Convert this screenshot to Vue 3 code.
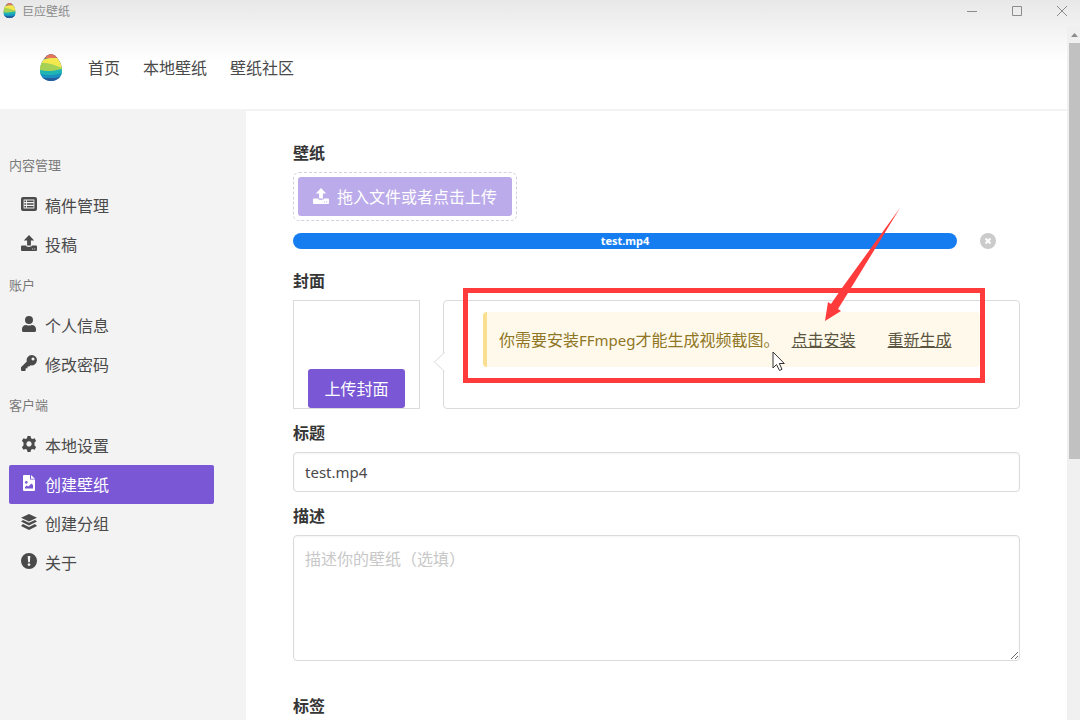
<script setup>
import { ref } from 'vue'

const title = ref('test.mp4')
const description = ref('')

const nav = ['首页', '本地壁纸', '壁纸社区']

const groups = [
  {
    name: '内容管理',
    items: [
      { text: '稿件管理', icon: 'list' },
      { text: '投稿', icon: 'upload' },
    ],
  },
  {
    name: '账户',
    items: [
      { text: '个人信息', icon: 'user' },
      { text: '修改密码', icon: 'key' },
    ],
  },
  {
    name: '客户端',
    items: [
      { text: '本地设置', icon: 'cog' },
      { text: '创建壁纸', icon: 'image', active: true },
      { text: '创建分组', icon: 'layers' },
      { text: '关于', icon: 'about' },
    ],
  },
]

const icons = {
  list: 'M2 1h12a2 2 0 0 1 2 2v10a2 2 0 0 1-2 2H2a2 2 0 0 1-2-2V3a2 2 0 0 1 2-2zM2.6 3.6v8.8h10.8V3.6zM3.4 4.4h1.7v1.6H3.4zM6 4.4h6.6v1.6H6zM3.4 7.2h1.7v1.6H3.4zM6 7.2h6.6v1.6H6zM3.4 10h1.7v1.6H3.4zM6 10h6.6v1.6H6z',
  upload: 'M8 0L13.2 5.400H9.900V10.600H6.100V5.400H2.800zM1 10.600H5.200C5.400 11.800 6 12 8 12S10.600 11.800 10.800 10.600H15a1 1 0 0 1 1 1V15a1 1 0 0 1-1 1H1a1 1 0 0 1-1-1V11.600a1 1 0 0 1 1-1zM11.200 13.600v.9h.9v-.9zM13.300 13.600v.9h.9v-.9z',
  user: 'M8 0a4 4 0 1 1 0 8 4 4 0 0 1 0-8zM5.2 9c1.8.8 3.8.8 5.6 0C13.400 9 15 10.800 15 13.200V14.500A1.500 1.500 0 0 1 13.500 16h-11A1.500 1.500 0 0 1 1 14.500V13.200C1 10.800 2.600 9 5.200 9z',
  key: 'M10.8 0a5.200 5.200 0 1 1-1.300 10.250L8.200 11.500H6.500V13.300H4.700V15.200L4 16H.7L0 15.300V12.300L5.800 6.500A5.200 5.200 0 0 1 10.800 0zM12 2.500a1.500 1.500 0 1 0 .01 0z',
  cog: 'M6.500 0h3l.5 2.200 1.400.8 2.200-.7 1.500 2.600L13.500 6.500v3l1.600 1.600-1.500 2.600-2.200-.7-1.400.8L9.500 16h-3L6 13.800 4.600 13l-2.200.7L.9 11.100 2.500 9.500v-3L.9 4.900l1.500-2.600 2.200.7L6 2.200zM8 5.300a2.700 2.700 0 1 0 .01 0z',
  image: 'M3 0H9V4.500H14V15a1 1 0 0 1-1 1H3a1 1 0 0 1-1-1V1a1 1 0 0 1 1-1zM10 0L14 3.700H10zM5.300 6a1.400 1.400 0 1 0 .01 0zM4 13.500H12V10L10.500 8.600 7.300 11.600 5.800 10.400 4 12z',
  layers: 'M8 0L16 3.800 8 7.600 0 3.800zM2 5.900L8 8.700 14 5.900 16 7.600 8 11.600 0 7.600zM2 10.100L8 12.900 14 10.100 16 11.900 8 16 0 11.900z',
  about: 'M8 0a8 8 0 1 1 0 16A8 8 0 0 1 8 0zM6.700 3L7.100 9.200H8.900L9.300 3zM8 10.200a1.400 1.400 0 1 0 .01 0z',
}
</script>

<template>
  <div class="window">
    <svg class="defs" width="0" height="0" aria-hidden="true">
      <defs>
        <clipPath id="egg-shape">
          <path d="M11 0C16 0 22 9 22 16C22 23 17 27 11 27S0 23 0 16C0 9 6 0 11 0z" />
        </clipPath>
        <symbol id="egg" viewBox="0 0 22 27">
          <g clip-path="url(#egg-shape)">
            <rect width="22" height="27" fill="#225d9e" />
            <path d="M0 0H22V5L0 4z" fill="#e2755a" />
            <path d="M0 7C6 3 14 4 22 4V17H0z" fill="#f3e94f" />
            <path d="M0 9C7 8 14 11 22 14V19H0z" fill="#a5d154" />
            <path d="M0 16C7 18 14 17 22 15V22H0z" fill="#1fb5b4" />
            <path d="M0 20C8 22 15 21 22 19V24H0z" fill="#1990c0" />
            <path d="M0 23C8 25 15 25 22 22V27H0z" fill="#225d9e" />
          </g>
        </symbol>
      </defs>
    </svg>

    <div class="titlebar">
      <svg class="app-icon"><use href="#egg" /></svg>
      <span class="app-name">巨应壁纸</span>
      <div class="window-buttons">
        <button type="button" aria-label="最小化">
          <svg width="12" height="12" viewBox="0 0 12 12"><path d="M1 6.500H11" /></svg>
        </button>
        <button type="button" aria-label="最大化">
          <svg width="12" height="12" viewBox="0 0 12 12"><path d="M1.500 1.500h9v9h-9z" /></svg>
        </button>
        <button type="button" aria-label="关闭">
          <svg width="12" height="12" viewBox="0 0 12 12"><path d="M1 1L11 11M11 1L1 11" /></svg>
        </button>
      </div>
    </div>

    <div class="viewport">
      <div class="page">
        <header class="header">
          <a href="#" class="logo" aria-label="巨应壁纸"><svg><use href="#egg" /></svg></a>
          <nav class="nav">
            <a v-for="item in nav" :key="item" href="#">{{ item }}</a>
          </nav>
        </header>

        <div class="columns">
          <aside class="sidebar">
            <section v-for="group in groups" :key="group.name" class="menu-group">
              <h2 class="menu-label">{{ group.name }}</h2>
              <a
                v-for="item in group.items"
                :key="item.text"
                href="#"
                class="menu-item"
                :class="{ active: item.active }"
              >
                <svg class="icon" viewBox="0 0 16 16"><path :d="icons[item.icon]" fill-rule="evenodd" /></svg>
                <span>{{ item.text }}</span>
              </a>
            </section>
          </aside>

          <main class="main">
            <h3 class="label">壁纸</h3>
            <div class="dropzone">
              <button type="button" class="button upload" disabled>
                <svg class="icon" viewBox="0 0 16 16"><path :d="icons.upload" fill-rule="evenodd" /></svg>
                <span>拖入文件或者点击上传</span>
              </button>
            </div>
            <div class="progress-row">
              <div class="progress">test.mp4</div>
              <button type="button" class="delete" aria-label="删除">
                <svg width="16" height="16" viewBox="0 0 16 16">
                  <circle cx="8" cy="8" r="8" fill="#cbcbcb" />
                  <path d="M5.500 5.500L10.500 10.500M10.500 5.500L5.500 10.500" stroke="#fff" stroke-width="2" />
                </svg>
              </button>
            </div>

            <h3 class="label">封面</h3>
            <div class="cover-row">
              <div class="cover">
                <button type="button" class="button">上传封面</button>
              </div>
              <div class="popover">
                <svg class="notch" width="12" height="22" viewBox="0 0 12 22">
                  <path d="M11.500 1.500L1.500 11L11.500 20.500" fill="#fff" stroke="#dbdbdb" />
                </svg>
                <div class="notice">
                  <span>你需要安装<span class="latin">FFmpeg</span>才能生成视频截图。</span>
                  <a href="#">点击安装</a>
                  <a href="#">重新生成</a>
                </div>
                <div class="highlight"></div>
                <svg class="pointer-arrow" width="85" height="120" viewBox="0 0 85 120">
                  <path d="M80 3L22 83L11 99L8 97L5 116L21 106L18 104L31 83z" fill="#ff3b3b" />
                </svg>
                <svg class="cursor" width="14" height="21" viewBox="0 0 14 21">
                  <path
                    d="M1 1V17L4.500 13.500L7.500 19.500L10 18.300L7.300 12.500H12.300z"
                    fill="#fff"
                    stroke="#333"
                  />
                </svg>
              </div>
            </div>

            <label class="label" for="title">标题</label>
            <input id="title" v-model="title" class="input" type="text" />

            <label class="label" for="description">描述</label>
            <textarea
              id="description"
              v-model="description"
              class="textarea"
              placeholder="描述你的壁纸（选填）"
            ></textarea>

            <h3 class="label tags">标签</h3>
          </main>
        </div>
      </div>

      <div class="scrollbar" aria-hidden="true">
        <svg width="11" height="17" viewBox="0 0 11 17"><path d="M2 11L5.500 7L9 11z" fill="#8c8c8c" /></svg>
        <div class="thumb"></div>
      </div>
    </div>
  </div>
</template>

<style>
body {
  margin: 0;
  background: #fff;
}
</style>

<style scoped>
.window {
  box-sizing: border-box;
  display: flex;
  flex-direction: column;
  min-height: 100vh;
  background: linear-gradient(#e8e8e8, #fff 62px);
  color: #4a4a4a;
  font: 16px/24px "Noto Sans CJK SC", "Noto Sans", sans-serif;
}

.window *,
.window *::before {
  box-sizing: border-box;
}

.defs {
  position: absolute;
}

button,
input,
textarea {
  font: inherit;
  color: inherit;
}

button {
  margin: 0;
  padding: 0;
  border: 0;
  background: none;
}

a {
  color: inherit;
  text-decoration: none;
}

h2,
h3 {
  margin: 0;
}

.titlebar {
  display: flex;
  align-items: flex-start;
  height: 26px;
  padding-left: 3px;
}

.app-icon {
  width: 13px;
  height: 15px;
  margin: 3px 6px 0 0;
}

.app-name {
  color: #8c8c8c;
  font-size: 12px;
  line-height: 22px;
}

.window-buttons {
  display: flex;
  gap: 9px;
  margin-left: auto;
}

.window-buttons button {
  display: flex;
  align-items: center;
  justify-content: center;
  width: 36px;
  height: 21px;
}

.window-buttons svg {
  fill: none;
  stroke: #8c8c8c;
}

.viewport {
  display: flex;
  flex: 1;
}

.page {
  display: flex;
  flex: 1;
  flex-direction: column;
  min-width: 0;
}

.header {
  display: flex;
  align-items: center;
  height: 85px;
  padding-left: 40px;
  border-bottom: 2px solid #f3f3f3;
}

.logo,
.logo svg {
  display: block;
  width: 22px;
  height: 27px;
}

.nav {
  display: flex;
  gap: 23px;
  margin-left: 26px;
  padding-bottom: 2px;
}

.columns {
  display: flex;
  flex: 1;
}

.sidebar {
  flex: none;
  width: 246px;
  padding: 34px 32px 0 9px;
  background: #f3f3f3;
}

.menu-group {
  margin-bottom: 1px;
}

.menu-label {
  margin-bottom: 1px;
  color: #7a7a7a;
  font-size: 13px;
  font-weight: 400;
  line-height: 40px;
}

.menu-item {
  display: flex;
  align-items: center;
  gap: 8px;
  height: 39px;
  padding: 0 12px 1px;
  border-radius: 2px;
}

.icon {
  flex: none;
  width: 16px;
  height: 16px;
  fill: currentColor;
}

.menu-item .icon {
  margin-bottom: 2px;
}

.menu-item.active {
  background: #7957d5;
  color: #fff;
}

.main {
  flex: 1;
  min-width: 0;
  padding: 30px 47px 0;
  background: #fff;
}

.label {
  display: block;
  margin-bottom: 9px;
  color: #363636;
  font-size: 16px;
  font-weight: 700;
  line-height: 22px;
}

.dropzone {
  width: fit-content;
  padding: 4px;
  border: 1px dashed #d5d0dc;
  border-radius: 6px;
}

.button {
  display: flex;
  align-items: center;
  gap: 8px;
  height: 39px;
  padding: 0 16px 2px;
  border-radius: 3px;
  background: #7957d5;
  color: #fff;
}

.upload {
  padding: 0 15px 2px;
  background: #bcabea;
}

.progress-row {
  display: flex;
  align-items: center;
  gap: 23px;
  margin: 12px 24px 20px 0;
}

.progress {
  flex: 1;
  border-radius: 8px;
  background: #167df0;
  color: #fff;
  font: 700 11px/16px "Noto Sans", sans-serif;
  text-align: center;
}

.delete,
.delete svg {
  display: block;
}

.cover-row {
  display: flex;
  gap: 23px;
  height: 109px;
  margin-bottom: 12px;
}

.cover {
  display: flex;
  align-items: flex-end;
  justify-content: center;
  width: 127px;
  border: 1px solid #dbdbdb;
}

.popover {
  position: relative;
  flex: 1;
  padding: 11px 39px;
  border: 1px solid #dbdbdb;
  border-radius: 4px;
}

.notch {
  position: absolute;
  top: 50px;
  left: -11px;
}

.notice {
  display: flex;
  padding: 15px 12px;
  border-left: 4px solid #f9df8f;
  border-radius: 4px;
  background: #fff9eb;
  color: #8f7625;
  white-space: nowrap;
}

.notice a {
  margin-left: 12px;
  color: #5a5540;
  text-decoration: underline;
}

.notice a + a {
  margin-left: 32px;
}

.latin {
  font-family: "Noto Sans", sans-serif;
  font-size: 15px;
}

.highlight {
  position: absolute;
  inset: -13px 34px 25px 19px;
  border: 5px solid #ff3b3b;
}

.pointer-arrow {
  position: absolute;
  top: -96px;
  left: 376px;
}

.cursor {
  position: absolute;
  top: 50px;
  left: 328px;
}

.input,
.textarea {
  display: block;
  width: 100%;
  border: 1px solid #dbdbdb;
  border-radius: 4px;
  background: #fff;
  box-shadow: inset 0 1px 2px rgba(10, 10, 10, 0.05);
}

.input {
  height: 40px;
  margin-bottom: 12px;
  padding: 0 11px;
  font-family: "Noto Sans", "Noto Sans CJK SC", sans-serif;
  font-size: 15px;
}

.textarea {
  height: 126px;
  padding: 10px 11px;
  resize: vertical;
}

.textarea::placeholder {
  color: #c8c8c8;
  opacity: 1;
}

.tags {
  margin: 33px 0 0;
}

.scrollbar {
  display: flex;
  flex-direction: column;
  width: 13px;
  padding-left: 2px;
  background: #f0f0f0;
}

.scrollbar svg {
  flex: none;
}

.thumb {
  height: 60%;
  background: #c1c1c1;
}
</style>
